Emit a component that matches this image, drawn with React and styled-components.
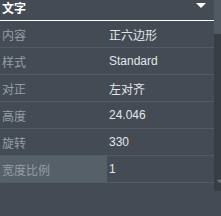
import styled, { createGlobalStyle } from "styled-components";

const GlobalStyle = createGlobalStyle`
  html, body {
    margin: 0;
    padding: 0;
    background: #444b55;
  }
  body {
    font-family: "Liberation Sans", "Noto Sans CJK SC", sans-serif;
    font-size: 12px;
  }
`;

const Panel = styled.div`
  width: 221px;
  height: 216px;
  background: #444b55;
  overflow: hidden;
`;

const Frame = styled.div`
  display: flex;
  height: 191px;
`;

const Content = styled.div`
  flex: 1;
  overflow: hidden;
`;

const Header = styled.div`
  display: flex;
  justify-content: space-between;
  align-items: flex-start;
  height: 20px;
  border-bottom: 1px solid #ffffff;
  padding-left: 2px;
`;

const Title = styled.span`
  color: #ffffff;
  font-weight: bold;
  line-height: 19px;
`;

const Caret = styled.span`
  width: 0;
  height: 0;
  margin: 3px 8px 0 0;
  border-left: 5px solid transparent;
  border-right: 5px solid transparent;
  border-top: 5px solid #ffffff;
`;

const Row = styled.div`
  display: flex;
  height: 26px;
  border-bottom: 1px solid #535a63;
`;

const Label = styled.div`
  width: 105px;
  padding-left: 2px;
  display: flex;
  align-items: center;
  color: #959ea7;
  background: ${(p) => (p.$active ? "#566068" : "transparent")};
`;

const Value = styled.div`
  flex: 1;
  padding-left: 2px;
  display: flex;
  align-items: center;
  color: #e1e6ea;
`;

const Scrollbar = styled.div`
  width: 7px;
  display: flex;
  flex-direction: column;
  background: #393e45;
`;

const Thumb = styled.div`
  height: 34px;
  background: #515962;
`;

const Track = styled.div`
  flex: 1;
  display: flex;
  flex-direction: column;
  justify-content: flex-end;
  align-items: flex-end;
  padding-bottom: 8px;
`;

const rows = [
  ["内容", "正六边形"],
  ["样式", "Standard"],
  ["对正", "左对齐"],
  ["高度", "24.046"],
  ["旋转", "330"],
  ["宽度比例", "1", true],
  ["倾斜", "0"],
];

export default function App() {
  return (
    <>
      <GlobalStyle />
      <Panel>
        <Frame>
          <Content>
            <Header>
              <Title>文字</Title>
              <Caret />
            </Header>
            {rows.map(([label, value, active]) => (
              <Row key={label}>
                <Label $active={active}>{label}</Label>
                <Value>{value}</Value>
              </Row>
            ))}
          </Content>
          <Scrollbar>
            <Thumb />
            <Track>
              <svg width="4" height="4" viewBox="0 0 4 4">
                <path d="M0 0.5 L3 3.5 M3 0.5 L3 3.5" stroke="#8a929a" strokeWidth="1" fill="none" />
              </svg>
            </Track>
          </Scrollbar>
        </Frame>
      </Panel>
    </>
  );
}
